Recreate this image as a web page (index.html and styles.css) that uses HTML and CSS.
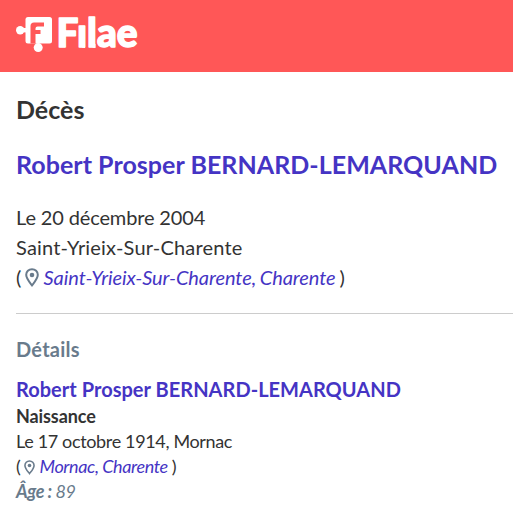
FILE: index.html
```html
<!DOCTYPE html>
<html lang="fr">
<head>
  <meta charset="UTF-8" />
  <title>Filae - Décès</title>
  <link rel="stylesheet" href="styles.css">
</head>
<body>

  <header class="site-header">
    <svg class="logo" width="130" height="56" viewBox="16 6 130 56">
      <!-- Puzzle piece -->
      <g fill="#fff">
        <circle cx="20.2" cy="30.2" r="4.2" />
        <rect x="21" y="28" width="6" height="4.4" />
        <rect x="25.5" y="17" width="26.5" height="26.5" rx="2.5" />
        <circle cx="38.2" cy="47.600" r="4.500" />
      </g>
      <path class="logo-mark" d="M30.500 43.500V26q0-3.500 3.500-3.500H44V26.500h-6.500q-2 0-2 2v1.500h5v4h-5v9.500z" />
      <text class="logo-text" x="56.5" y="47.300" textLength="81" lengthAdjust="spacingAndGlyphs">Fılae</text>
      <!-- Curled feet of the i and the l -->
      <path class="logo-feet" d="M81.500 42q0 4 3.500 4M92 42q0 4 3.500 4" />
    </svg>
  </header>

  <main class="record">
    <!-- Main record -->
    <h1 class="record-type">Décès</h1>
    <h2 class="record-name">Robert Prosper BERNARD-LEMARQUAND</h2>
    <div class="record-event">
      <div class="event-date">Le 20 décembre 2004</div>
      <div class="event-town">Saint-Yrieix-Sur-Charente</div>
      <div class="place">(
        <svg class="pin" viewBox="0 0 14 19">
          <path d="M7 1.200C3.700 1.200 1.200 3.700 1.200 6.800 1.200 10.500 4 13.500 7 17.300 10 13.500 12.800 10.500 12.800 6.800 12.800 3.700 10.300 1.200 7 1.200z" />
          <circle cx="7" cy="7" r="2.300" />
        </svg>
        <a class="place-link">Saint-Yrieix-Sur-Charente, Charente</a> )</div>
    </div>

    <!-- Details -->
    <section class="details">
      <h3 class="details-title">Détails</h3>
      <div class="details-name">Robert Prosper BERNARD-LEMARQUAND</div>
      <div class="details-label">Naissance</div>
      <div class="details-date">Le 17 octobre 1914, Mornac</div>
      <div class="place place-small">(
        <svg class="pin pin-small" viewBox="0 0 14 19">
          <path d="M7 1.200C3.700 1.200 1.200 3.700 1.200 6.800 1.200 10.500 4 13.500 7 17.300 10 13.500 12.800 10.500 12.800 6.800 12.800 3.700 10.300 1.200 7 1.200z" />
          <circle cx="7" cy="7" r="2.300" />
        </svg>
        <a class="place-link">Mornac, Charente</a> )</div>
      <div class="age"><b>Âge :</b> 89</div>
    </section>
  </main>

</body>
</html>
```

FILE: styles.css
```css
body {
  font-family: Lato, sans-serif;
  background-color: #fff;
  color: #333;
  margin: 0;
  overflow: hidden;
}

.site-header {
  background-color: #ff5757;
  height: 72px;
  padding: 6px 16px 0;
  box-sizing: border-box;
}

.logo {
  display: block;
}

.logo-mark {
  fill: #ff5757;
}

.logo-text {
  font-size: 40px;
  font-weight: 900;
  fill: #fff;
  stroke: #fff;
  stroke-width: 1.5px;
  stroke-linejoin: round;
}

.logo-feet {
  fill: none;
  stroke: #fff;
  stroke-width: 4px;
}

.record {
  padding-left: 16px;
  white-space: nowrap;
}

.record-type {
  margin: 22px 0 0;
  font-size: 25px;
  line-height: 30px;
}

.record-name {
  margin: 25px 0 0;
  font-size: 25px;
  line-height: 30px;
  letter-spacing: 0.04px;
  color: #4534c4;
}

.record-event {
  margin-top: 23px;
  padding-bottom: 21px;
  border-bottom: 1px solid #ccc;
  font-size: 20px;
  line-height: 30px;
}

.event-date {
  letter-spacing: -0.14px;
}

.event-town {
  letter-spacing: 0.19px;
}

.place {
  letter-spacing: -0.07px;
  word-spacing: -0.9px;
}

.place-link {
  color: #4534c4;
  font-style: italic;
}

.pin {
  width: 14px;
  height: 19px;
  margin: -2px 0;
  vertical-align: 0;
  fill: none;
  stroke: #697b8c;
  stroke-width: 2;
}

.pin circle {
  fill: #697b8c;
  stroke: none;
}

/* Details block */
.details {
  padding-top: 22px;
  font-size: 18px;
  line-height: 25px;
}

.details-title {
  margin: 0 0 14px;
  font-size: 20px;
  line-height: 26px;
  letter-spacing: 0.25px;
  color: #697b8c;
}

.details-name {
  font-size: 20px;
  font-weight: bold;
  line-height: 27px;
  letter-spacing: 0.03px;
  color: #4534c4;
}

.details-label {
  padding-top: 1px;
  font-weight: bold;
  letter-spacing: -0.1px;
}

.details-date {
  letter-spacing: -0.35px;
}

.place-small {
  letter-spacing: -0.38px;
  word-spacing: -0.2px;
}

.pin-small {
  width: 11px;
  height: 15px;
  vertical-align: 0;
}

.age {
  color: #697b8c;
  font-style: italic;
  letter-spacing: -0.45px;
}
```
